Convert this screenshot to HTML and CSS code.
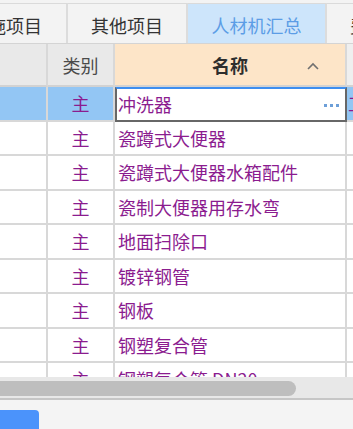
FILE: index.html
```html
<!DOCTYPE html>
<html lang="zh-CN">
<head>
  <meta charset="UTF-8" />
  <meta name="viewport" content="width=device-width, initial-scale=1.0"/>
  <title>人材机汇总</title>
  <link rel="stylesheet" href="styles.css">
</head>
<body>

<div class="tabs">
  <div class="tab tab-cut">措施项目</div>
  <div class="tab">其他项目</div>
  <div class="tab active">人材机汇总</div>
  <div class="tab">费用汇总</div>
</div>

<div class="grid">
  <div class="row head">
    <div class="cell"></div>
    <div class="cell c-type">类别</div>
    <div class="cell c-name">名称
      <svg class="sort" width="12" height="8" viewBox="0 0 12 8"><path d="M1 7 L6 2 L11 7" fill="none" stroke="#707070" stroke-width="1.6"/></svg>
    </div>
    <div class="cell c-more"></div>
  </div>

  <div class="row sel">
    <div class="cell"></div>
    <div class="cell c-type">主</div>
    <div class="cell c-name editing">冲洗器<span class="dots"><i></i><i></i><i></i></span></div>
    <div class="cell c-more">工</div>
  </div>
  <div class="row"><div class="cell"></div><div class="cell c-type">主</div><div class="cell c-name">瓷蹲式大便器</div><div class="cell c-more"></div></div>
  <div class="row"><div class="cell"></div><div class="cell c-type">主</div><div class="cell c-name">瓷蹲式大便器水箱配件</div><div class="cell c-more"></div></div>
  <div class="row"><div class="cell"></div><div class="cell c-type">主</div><div class="cell c-name">瓷制大便器用存水弯</div><div class="cell c-more"></div></div>
  <div class="row"><div class="cell"></div><div class="cell c-type">主</div><div class="cell c-name">地面扫除口</div><div class="cell c-more"></div></div>
  <div class="row"><div class="cell"></div><div class="cell c-type">主</div><div class="cell c-name">镀锌钢管</div><div class="cell c-more"></div></div>
  <div class="row"><div class="cell"></div><div class="cell c-type">主</div><div class="cell c-name">钢板</div><div class="cell c-more"></div></div>
  <div class="row"><div class="cell"></div><div class="cell c-type">主</div><div class="cell c-name">钢塑复合管</div><div class="cell c-more"></div></div>
  <div class="row"><div class="cell"></div><div class="cell c-type">主</div><div class="cell c-name">钢塑复合管 DN20</div><div class="cell c-more"></div></div>
</div>

<div class="hscroll"><div class="thumb"></div></div>

<div class="footer">
  <button class="btn-save">保存</button>
</div>

</body>
</html>
```

FILE: styles.css
```css
* {
  box-sizing: border-box;
}

body {
  margin: 0;
  width: 353px;
  height: 429px;
  overflow: hidden;
  font-family: "Noto Sans CJK SC", "Noto Sans", sans-serif;
  font-size: 18px;
  background: #f3f3f3;
}

/* tabs */
.tabs {
  display: flex;
  height: 44px;
  padding-top: 3px;
  background: #f3f3f3;
  border-bottom: 1px solid #d4d4d4;
  white-space: nowrap;
}

.tab {
  flex: none;
  width: 120px;
  height: 40px;
  line-height: 42px;
  text-align: center;
  color: #333;
  border-top: 1px solid #dadada;
  border-right: 2px solid #dcdcdc;
}

.tab-cut {
  width: 122px;
  margin-left: -54px;
}

.tab.active {
  width: 139px;
  background: #cde5fb;
  color: #5c9de6;
}

/* grid */
.grid {
  height: 333px;
  overflow: hidden;
  background: #fff;
}

.row {
  display: grid;
  grid-template-columns: 48px 67px 232px 1fr;
  height: 34.5px;
}

.cell {
  border-right: 2px solid #d8d8d8;
  border-bottom: 2px solid #d8d8d8;
  color: #8b1c8f;
  display: flex;
  align-items: center;
  white-space: nowrap;
  overflow: hidden;
}

.c-type {
  justify-content: center;
}

.c-name {
  padding-left: 3px;
  position: relative;
}

.c-more {
  border-right: none;
  padding-left: 0;
}

.row.head {
  height: 43px;
}

.head .cell {
  background: #e9e9e9;
  color: #4a4a4a;
  border-bottom-color: #d2d2d2;
}

.head .c-name {
  background: #fde5c8;
  color: #2e2e2e;
  font-weight: bold;
  justify-content: center;
  padding-left: 0;
}

.head .c-more {
  background: #efefef;
}

.sort {
  position: absolute;
  right: 26px;
  top: 18px;
}

.sel .cell {
  background: #93c6f4;
}

.sel .c-name.editing {
  background: #fff;
  border: 2px solid #676767;
  border-top-color: #3d8ef0;
  padding-left: 1px;
}

.sel .c-more {
  padding-left: 1px;
}

.dots {
  position: absolute;
  right: 6px;
  top: 15px;
  display: flex;
  gap: 3px;
}

.dots i {
  width: 3px;
  height: 3px;
  background: #6d9fd8;
}

/* horizontal scrollbar */
.hscroll {
  height: 23px;
  padding: 4px 0 2px;
  background: #e8e8e8;
  border-bottom: 2px solid #c6c6c6;
}

.thumb {
  width: 296px;
  height: 15px;
  background: #bebebe;
  border-radius: 0 8px 8px 0;
}

/* footer */
.footer {
  padding-top: 10px;
  background: #f4f4f4;
}

.btn-save {
  margin-left: -40px;
  width: 79px;
  height: 40px;
  padding: 13px 0 0;
  border: none;
  border-radius: 4px;
  background: #4b93fb;
  color: #fff;
  font-family: inherit;
  font-size: 18px;
  line-height: 20px;
  vertical-align: top;
}
```
